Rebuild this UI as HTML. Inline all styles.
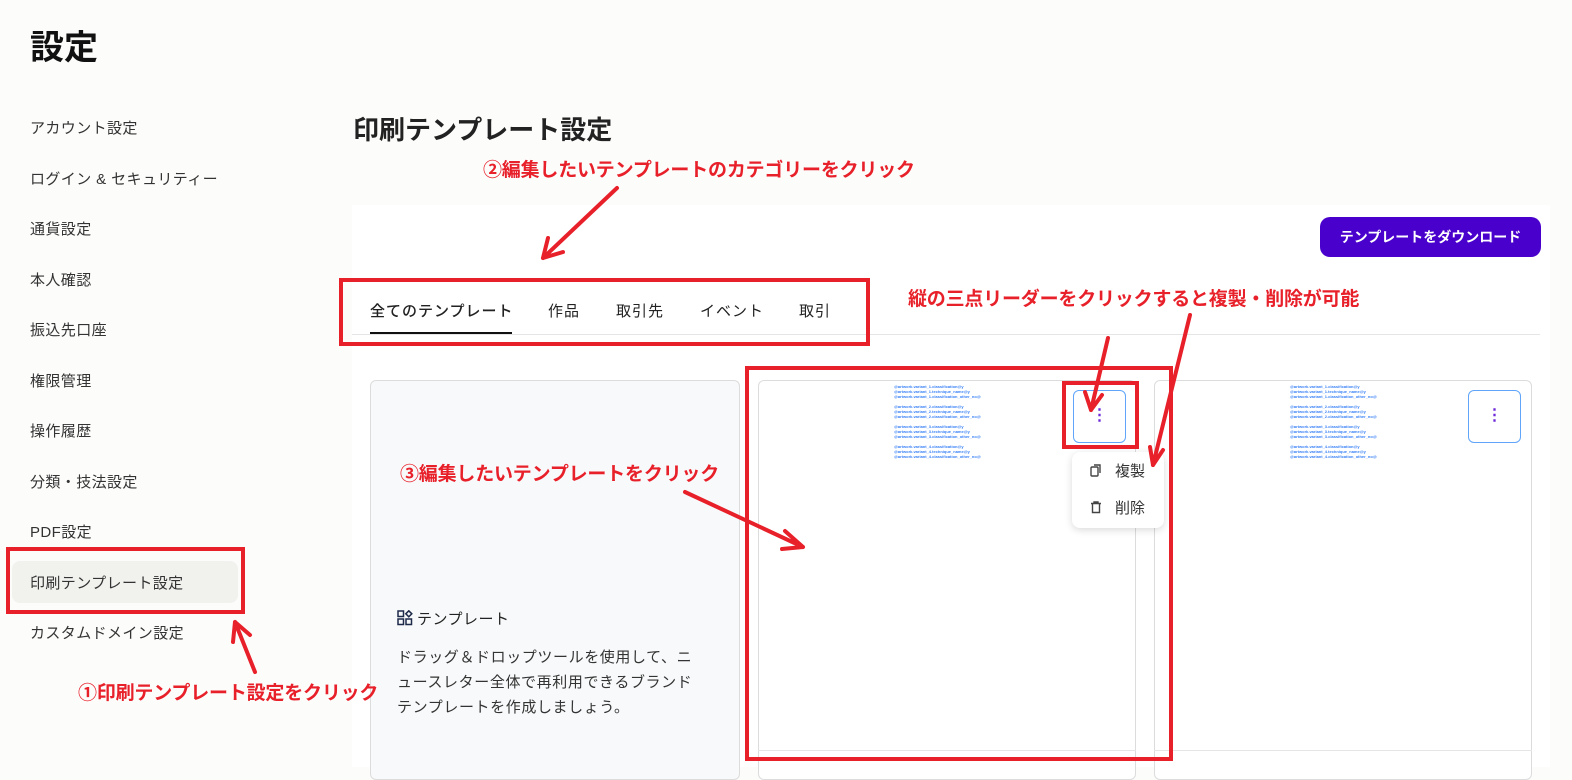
<!DOCTYPE html>
<html><head><meta charset="utf-8"><style>
*{margin:0;padding:0;box-sizing:border-box}
body{width:1572px;height:767px;overflow:hidden;background:#fcfcfb;font-family:"Liberation Sans","Noto Sans CJK JP",sans-serif;color:#222;position:relative}
.a{position:absolute;white-space:nowrap}
.side{font-size:15px;color:#333;letter-spacing:.4px}
.red{color:#e8202a;font-weight:bold;font-size:19px;letter-spacing:-.2px}
.tab{font-size:15px;color:#222;top:300px;letter-spacing:1px}
.card{position:absolute;border:1px solid #dcdcdc;border-radius:6px;background:#fff}
.tiny{font-size:4px;line-height:5px;color:#3b82f6;font-weight:bold}
</style></head><body>
<div class="a" style="left:30px;top:20px;font-size:34px;font-weight:bold;color:#111">設定</div>
<div class="a" style="left:12px;top:561px;width:226px;height:42px;background:#f1f1ee;border-radius:8px"></div>
<div class="a side" style="left:30px;top:117px">アカウント設定</div>
<div class="a side" style="left:30px;top:168px">ログイン & セキュリティー</div>
<div class="a side" style="left:30px;top:218px">通貨設定</div>
<div class="a side" style="left:30px;top:269px">本人確認</div>
<div class="a side" style="left:30px;top:319px">振込先口座</div>
<div class="a side" style="left:30px;top:370px">権限管理</div>
<div class="a side" style="left:30px;top:420px">操作履歴</div>
<div class="a side" style="left:30px;top:471px">分類・技法設定</div>
<div class="a side" style="left:30px;top:521px">PDF設定</div>
<div class="a side" style="left:30px;top:572px">印刷テンプレート設定</div>
<div class="a side" style="left:30px;top:622px">カスタムドメイン設定</div>

<div class="a" style="left:353px;top:110px;font-size:26px;font-weight:bold;color:#222">印刷テンプレート設定</div>
<div class="a" style="left:352px;top:205px;width:1198px;height:562px;background:#fff"></div>
<div class="a" style="left:1320px;top:217px;width:221px;height:40px;background:#4a00cc;border-radius:10px;color:#fff;font-size:14px;font-weight:bold;text-align:center;line-height:40px">テンプレートをダウンロード</div>
<div class="a tab" style="left:370px;font-weight:500">全てのテンプレート</div>
<div class="a tab" style="left:548px">作品</div>
<div class="a tab" style="left:616px">取引先</div>
<div class="a tab" style="left:700px">イベント</div>
<div class="a tab" style="left:799px">取引</div>
<div class="a" style="left:352px;top:334px;width:1188px;height:1px;background:#e5e5e5"></div>
<div class="a" style="left:370px;top:332px;width:142px;height:2px;background:#111"></div>

<div class="card" style="left:370px;top:380px;width:370px;height:400px;background:#f8f9fa"></div>
<div class="a" style="left:397px;top:608px;font-size:15px;letter-spacing:.5px"><svg width="16" height="16" viewBox="0 0 16 16" style="vertical-align:-2px;margin-right:4px" fill="none" stroke="#1e2a4a" stroke-width="1.5"><rect x="1" y="1" width="5.5" height="5.5"/><rect x="1" y="9" width="5.5" height="5.5"/><rect x="9" y="9" width="5.5" height="5.5"/><path d="M11.8 0.8l3 3-3 3-3-3z"/></svg>テンプレート</div>
<div class="a" style="left:397px;top:645px;font-size:15px;line-height:25px;color:#333;letter-spacing:.6px">ドラッグ＆ドロップツールを使用して、ニ<br>ュースレター全体で再利用できるブランド<br>テンプレートを作成しましょう。</div>

<div class="card" style="left:758px;top:380px;width:378px;height:400px"></div>
<div class="a" style="left:758px;top:750px;width:378px;height:1px;background:#e5e5e5"></div>
<div class="a tiny" style="left:894px;top:384px">@artwork.variant_1.classification@y<br>@artwork.variant_1.technique_name@y<br>@artwork.variant_1.classification_other_no@<br><br>@artwork.variant_2.classification@y<br>@artwork.variant_2.technique_name@y<br>@artwork.variant_2.classification_other_no@<br><br>@artwork.variant_3.classification@y<br>@artwork.variant_3.technique_name@y<br>@artwork.variant_3.classification_other_no@<br><br>@artwork.variant_4.classification@y<br>@artwork.variant_4.technique_name@y<br>@artwork.variant_4.classification_other_no@</div>
<div class="a" style="left:1073px;top:390px;width:53px;height:53px;border:1px solid #60a5fa;border-radius:6px;background:#fff;text-align:center;line-height:50px;color:#6d28d9;font-weight:bold;font-size:16px">⋮</div>

<div class="card" style="left:1154px;top:380px;width:378px;height:400px"></div>
<div class="a" style="left:1154px;top:750px;width:378px;height:1px;background:#e5e5e5"></div>
<div class="a tiny" style="left:1290px;top:384px">@artwork.variant_1.classification@y<br>@artwork.variant_1.technique_name@y<br>@artwork.variant_1.classification_other_no@<br><br>@artwork.variant_2.classification@y<br>@artwork.variant_2.technique_name@y<br>@artwork.variant_2.classification_other_no@<br><br>@artwork.variant_3.classification@y<br>@artwork.variant_3.technique_name@y<br>@artwork.variant_3.classification_other_no@<br><br>@artwork.variant_4.classification@y<br>@artwork.variant_4.technique_name@y<br>@artwork.variant_4.classification_other_no@</div>
<div class="a" style="left:1468px;top:390px;width:53px;height:53px;border:1px solid #60a5fa;border-radius:6px;background:#fff;text-align:center;line-height:50px;color:#6d28d9;font-weight:bold;font-size:16px">⋮</div>

<div class="a" style="left:1072px;top:452px;width:92px;height:76px;background:#fff;border-radius:8px;box-shadow:0 2px 8px rgba(0,0,0,.15)"></div>
<div class="a" style="left:1090px;top:460px;font-size:15px;color:#333"><svg width="12" height="13" viewBox="0 0 12 13" fill="none" stroke="#444" stroke-width="1.4" style="vertical-align:-1px;margin-right:13px"><rect x="1" y="3" width="7" height="9" rx="1"/><path d="M4 1h6v8"/></svg>複製</div>
<div class="a" style="left:1090px;top:497px;font-size:15px;color:#333"><svg width="12" height="13" viewBox="0 0 12 13" fill="none" stroke="#444" stroke-width="1.4" style="vertical-align:-1px;margin-right:13px"><path d="M1 2.5h10M2.5 2.5v9h7v-9M4 2.5V1h4v1.5"/></svg>削除</div>

<div class="a red" style="left:483px;top:155px">②編集したいテンプレートのカテゴリーをクリック</div>
<div class="a red" style="left:908px;top:284px">縦の三点リーダーをクリックすると複製・削除が可能</div>
<div class="a red" style="left:400px;top:459px">③編集したいテンプレートをクリック</div>
<div class="a red" style="left:78px;top:678px">①印刷テンプレート設定をクリック</div>

<svg class="a" style="left:0;top:0" width="1572" height="767" fill="none" stroke="#e8202a" stroke-width="4" stroke-linecap="round">
<rect x="341" y="280" width="527" height="64"/>
<rect x="747" y="368" width="424" height="391"/>
<rect x="1064" y="383" width="73" height="64"/>
<rect x="8" y="549" width="235" height="63"/>
<path d="M617 188L543 258M543 258L548 238M543 258L563 252"/>
<path d="M1108 338L1091 410M1091 410L1085 392M1091 410L1102 395"/>
<path d="M1190 315L1153 465M1153 465L1150 447M1153 465L1163 450"/>
<path d="M685 492L803 547M803 547L785 531M803 547L782 549"/>
<path d="M255 672L235 622M235 622L233 642M235 622L250 635"/>
</svg>
</body></html>
